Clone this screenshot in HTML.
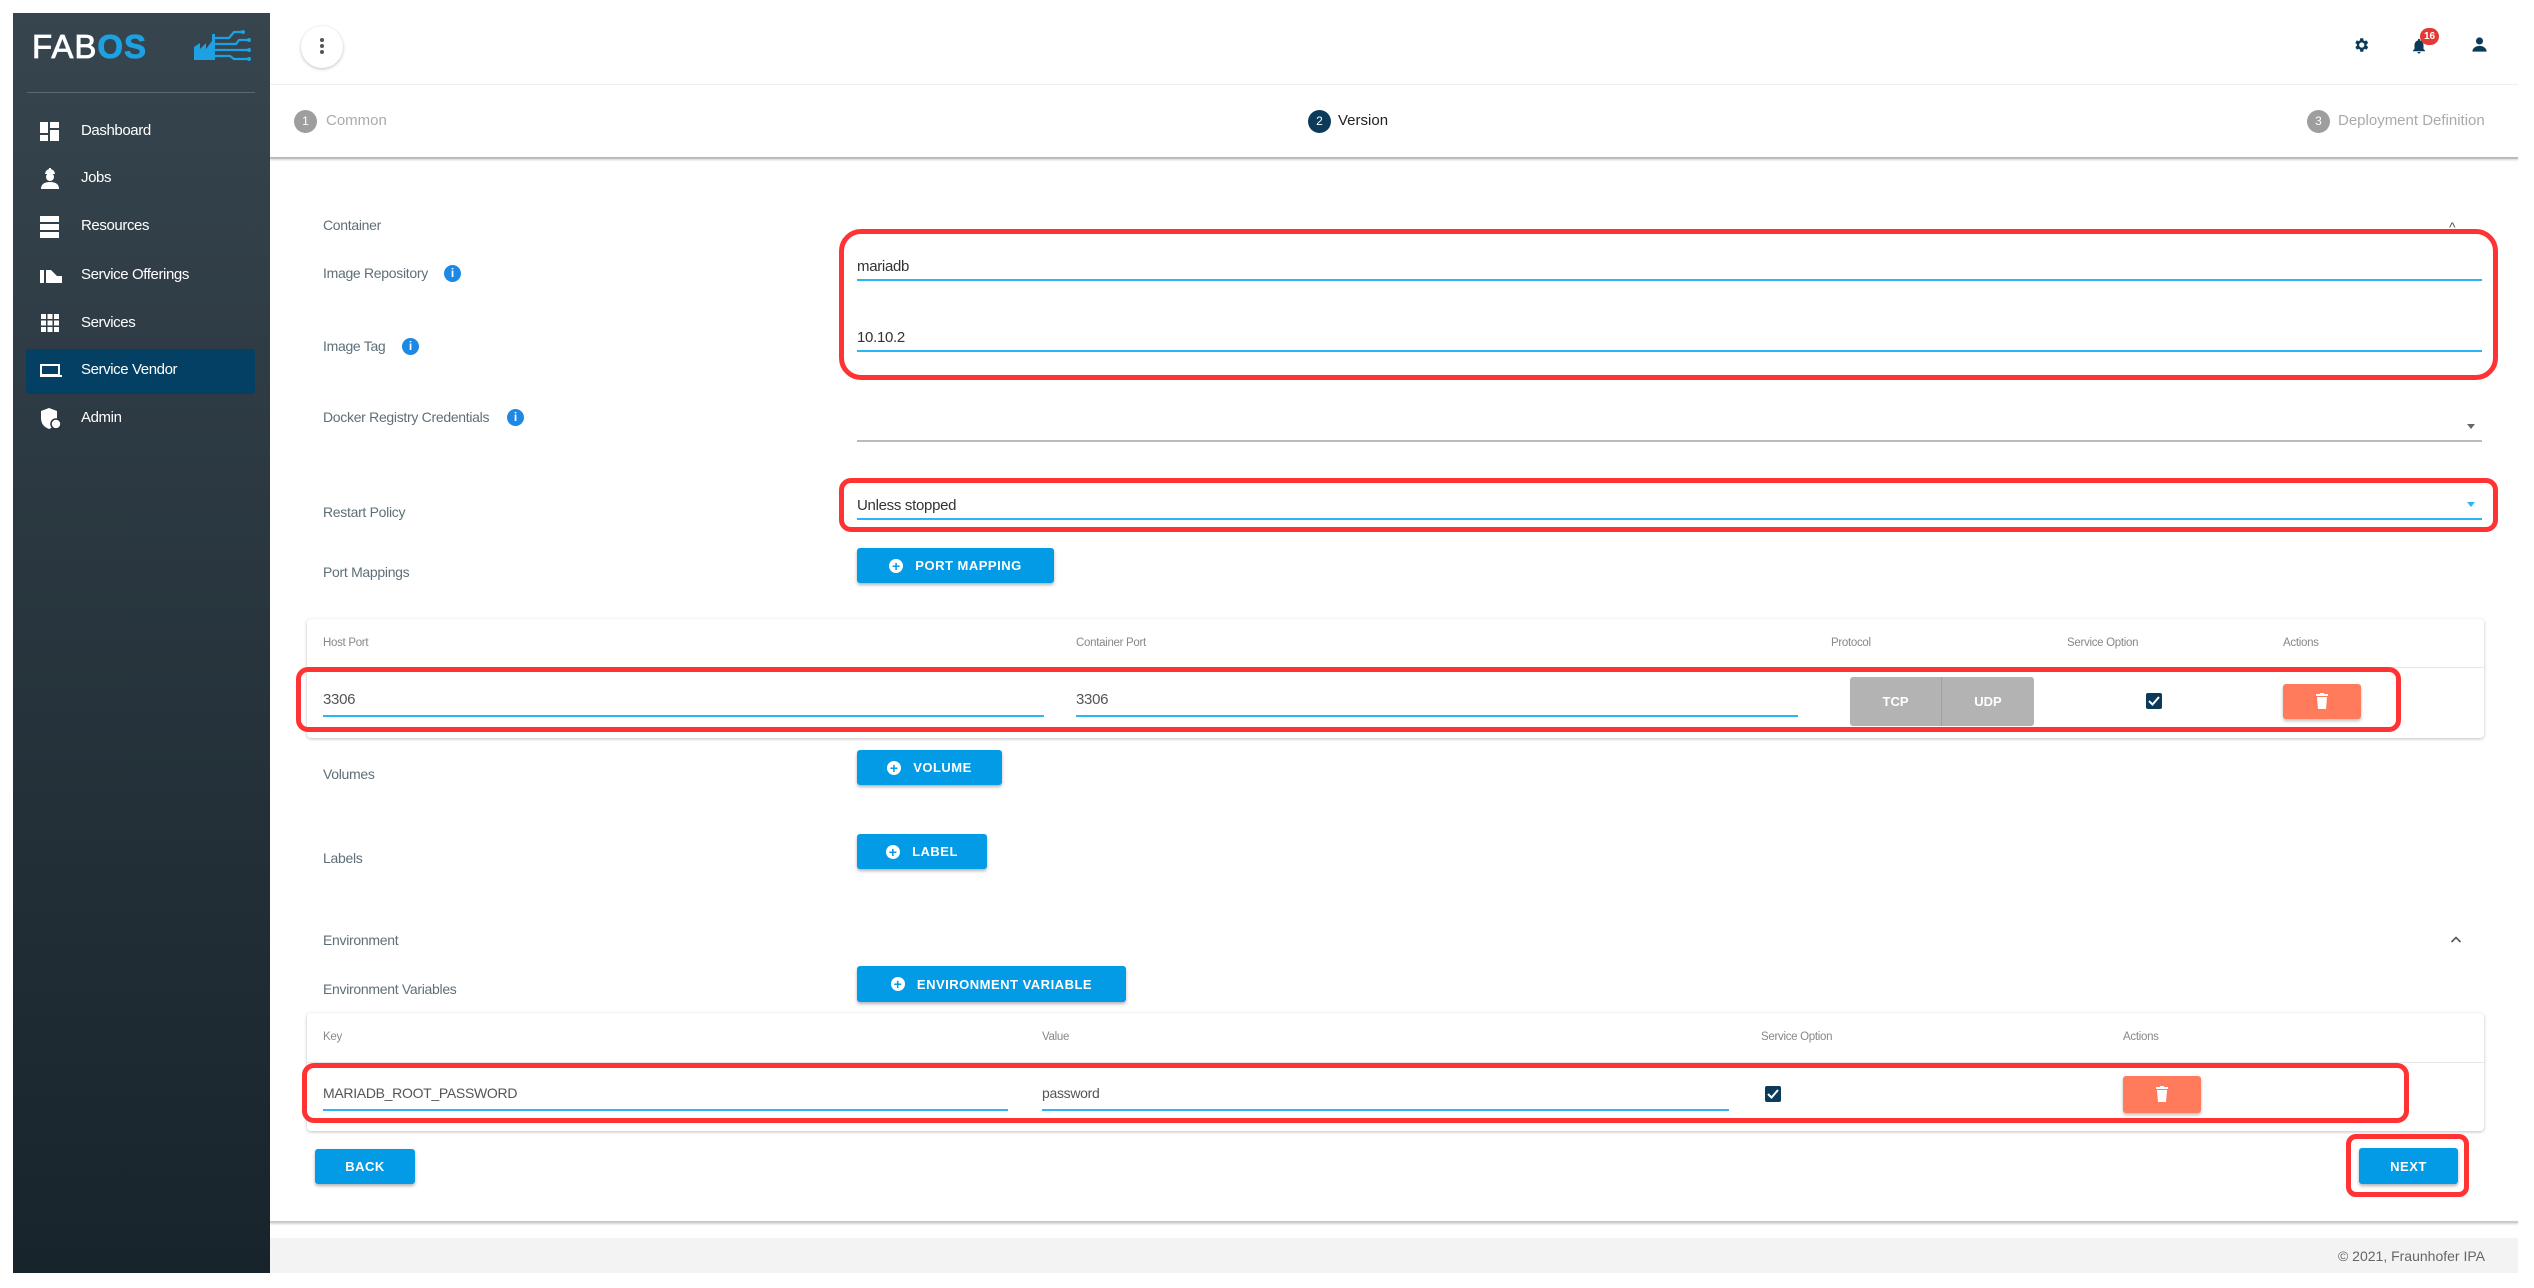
<!DOCTYPE html>
<html><head><meta charset="utf-8">
<style>
*{margin:0;padding:0;box-sizing:border-box}
body{width:2534px;height:1288px;position:relative;background:#fff;font-family:"Liberation Sans",sans-serif;overflow:hidden}
.a{position:absolute}
.t{position:absolute;height:30px;line-height:30px;white-space:nowrap}
#side{left:13px;top:13px;width:257px;height:1260px;background:linear-gradient(#37454f,#18242b)}
.nav{color:#fff;font-size:15px;letter-spacing:-0.4px}
.lbl{color:#5e6f78;font-size:14px;letter-spacing:-0.3px}
.hd{color:#888;font-size:11.5px;letter-spacing:-0.3px}
.inp{color:#333;font-size:15px;letter-spacing:-0.3px}
.ul{position:absolute;height:2px;background:#29b6f6}
.btn{position:absolute;background:#039be5;color:#fff;font-weight:bold;font-size:13px;letter-spacing:.5px;border-radius:3px;box-shadow:0 2px 3px rgba(0,0,0,.3);display:flex;align-items:center;justify-content:center}
.plus{width:14px;height:14px;border-radius:50%;background:#fff;color:#039be5;font-size:14px;line-height:14px;text-align:center;margin-right:12px;font-weight:bold}
.red{position:absolute;border:5px solid #ff3333;border-radius:22px}
.info{position:absolute;width:17px;height:17px;border-radius:50%;background:#1e88e5;color:#fff;font-size:12px;font-weight:bold;text-align:center;line-height:17px}
.card{position:absolute;background:#fff;border-radius:4px;box-shadow:0 1px 3px rgba(0,0,0,.25)}
.del{position:absolute;background:#ff7b5c;border-radius:3px;box-shadow:0 2px 3px rgba(0,0,0,.25)}
.chk{position:absolute;width:16px;height:16px;background:#0b3a5a;border-radius:2px}
.step{position:absolute;width:23px;height:23px;border-radius:50%;color:#fff;font-size:12px;text-align:center;line-height:23px}
</style></head><body>
<div id="side" class="a"></div>
<div class="t" style="left:32px;top:30px;height:34px;line-height:34px;font-size:33px;color:#fff;letter-spacing:1px;-webkit-text-stroke:0.8px #fff">FAB<span style="color:#1da1e2;font-weight:bold;-webkit-text-stroke:0.8px #1da1e2">OS</span></div>
<svg class="a" style="left:194px;top:28px" width="58" height="34" viewBox="0 0 58 34"><g fill="#1da1e2"><path d="M0 32 L0 19 L6 15 L6 21 L12 15 L12 21 L18 13 L18 32 Z"/><rect x="18" y="6" width="3" height="26"/></g><g stroke="#1da1e2" stroke-width="2.2" fill="none"><path d="M21 10 H35 L40 4 H48"/><path d="M21 16 H42 L45 12 H54"/><path d="M21 22 H54"/><path d="M21 28 H36 L40 31 H54"/></g><g fill="#1da1e2"><circle cx="49" cy="4" r="2"/><circle cx="55" cy="12" r="2"/><circle cx="55" cy="22" r="2"/><circle cx="55" cy="31" r="2"/></g></svg>
<div class="a" style="left:27px;top:92px;width:228px;height:1px;background:#5a6872"></div>
<div class="a" style="left:26px;top:349px;width:229px;height:45px;background:#044063;border-radius:3px"></div>
<svg class="a" style="left:40px;top:122px" width="20" height="20"><rect x="0" y="0" width="8" height="11" fill="#fff"/><rect x="10" y="0" width="9" height="6" fill="#fff"/><rect x="10" y="8" width="9" height="11" fill="#fff"/><rect x="0" y="13" width="8" height="6" fill="#fff"/></svg>
<svg class="a" style="left:41px;top:168px" width="18" height="22"><path d="M4 6 a5 5 0 0 1 10 0 z" fill="#fff"/><rect x="8" y="0" width="2" height="3" fill="#fff"/><circle cx="9" cy="9" r="4" fill="#fff"/><path d="M0 21 q0-7 9-7 q9 0 9 7z" fill="#fff"/></svg>
<svg class="a" style="left:40px;top:216px" width="20" height="22"><rect y="0" width="19" height="6" fill="#fff"/><rect y="8" width="19" height="6" fill="#fff"/><rect y="16" width="19" height="6" fill="#fff"/></svg>
<svg class="a" style="left:40px;top:268px" width="24" height="16"><rect x="0" y="2" width="4" height="13" fill="#fff"/><path d="M6 2 h5 l6 6 h5 v7 h-16z" fill="#fff"/></svg>
<svg class="a" style="left:41px;top:314px" width="18" height="18" fill="#fff"><rect x="0" y="0" width="5" height="5"/><rect x="6.5" y="0" width="5" height="5"/><rect x="13" y="0" width="5" height="5"/><rect x="0" y="6.5" width="5" height="5"/><rect x="6.5" y="6.5" width="5" height="5"/><rect x="13" y="6.5" width="5" height="5"/><rect x="0" y="13" width="5" height="5"/><rect x="6.5" y="13" width="5" height="5"/><rect x="13" y="13" width="5" height="5"/></svg>
<svg class="a" style="left:40px;top:364px" width="22" height="14"><rect x="1" y="1" width="18" height="10" fill="none" stroke="#fff" stroke-width="2"/><rect x="0" y="11" width="22" height="2" fill="#fff"/></svg>
<svg class="a" style="left:41px;top:408px" width="20" height="22"><path d="M8 0 L16 3 V10 Q16 18 8 21 Q0 18 0 10 V3Z" fill="#fff"/><circle cx="15" cy="16" r="5" fill="#fff" stroke="#263238" stroke-width="1.5"/></svg>
<div class="t nav" style="left:81px;top:116px">Dashboard</div>
<div class="t nav" style="left:81px;top:163px">Jobs</div>
<div class="t nav" style="left:81px;top:211px">Resources</div>
<div class="t nav" style="left:81px;top:260px">Service Offerings</div>
<div class="t nav" style="left:81px;top:308px">Services</div>
<div class="t nav" style="left:81px;top:355px">Service Vendor</div>
<div class="t nav" style="left:81px;top:403px">Admin</div>

<div class="a" style="left:301px;top:26px;width:42px;height:42px;border-radius:50%;background:#fff;box-shadow:0 1px 3px rgba(0,0,0,.25)"></div>
<div class="a" style="left:320px;top:38px;width:4px;height:4px;border-radius:50%;background:#555;box-shadow:0 6px 0 #555,0 12px 0 #555"></div>
<svg class="a" style="left:2352px;top:36px" width="18" height="18" viewBox="0 0 24 24"><path fill="#0b3a5a" d="M19.4 13a7.5 7.5 0 0 0 0-2l2.1-1.6-2-3.5-2.5 1a7 7 0 0 0-1.7-1L15 3h-4l-.4 2.9a7 7 0 0 0-1.7 1l-2.5-1-2 3.5L6.6 11a7.5 7.5 0 0 0 0 2l-2.1 1.6 2 3.5 2.5-1a7 7 0 0 0 1.7 1L11 21h4l.4-2.9a7 7 0 0 0 1.7-1l2.5 1 2-3.5zM13 15.5a3.5 3.5 0 1 1 0-7 3.5 3.5 0 0 1 0 7z"/></svg>
<svg class="a" style="left:2410px;top:36px" width="18" height="20" viewBox="0 0 24 24"><path fill="#0b3a5a" d="M12 22a2 2 0 0 0 2-2h-4a2 2 0 0 0 2 2zm6-6v-5c0-3-1.6-5.6-4.5-6.3V4a1.5 1.5 0 0 0-3 0v.7C7.6 5.4 6 8 6 11v5l-2 2v1h16v-1z"/></svg>
<div class="a" style="left:2420px;top:28px;width:19px;height:17px;border-radius:9px;background:#e53935;color:#fff;font-size:10px;font-weight:bold;text-align:center;line-height:17px">16</div>
<svg class="a" style="left:2471px;top:36px" width="17" height="17" viewBox="0 0 24 24"><circle cx="12" cy="7" r="5" fill="#0b3a5a"/><path d="M2 22c0-5 5-8 10-8s10 3 10 8z" fill="#0b3a5a"/></svg>

<div class="a" style="left:270px;top:84px;width:2248px;height:1px;background:#eee"></div>
<div class="a" style="left:270px;top:157px;width:2248px;height:2px;background:#bbb;box-shadow:0 1px 2px rgba(0,0,0,.2)"></div>
<div class="step" style="left:294px;top:110px;background:#9e9e9e">1</div>
<div class="t" style="left:326px;top:106px;color:#aaa;font-size:15px">Common</div>
<div class="step" style="left:1308px;top:110px;background:#0b3a5a">2</div>
<div class="t" style="left:1338px;top:106px;color:#222;font-size:15px">Version</div>
<div class="step" style="left:2307px;top:110px;background:#9e9e9e">3</div>
<div class="t" style="left:2338px;top:106px;color:#aaa;font-size:15px">Deployment Definition</div>

<div class="t lbl" style="left:323px;top:210px">Container</div>
<div class="t" style="left:2449px;top:212px;color:#555;font-size:14px">^</div>
<div class="t lbl" style="left:323px;top:258px">Image Repository</div><div class="info" style="left:444px;top:265px">i</div>
<div class="t lbl" style="left:323px;top:331px">Image Tag</div><div class="info" style="left:402px;top:338px">i</div>
<div class="t lbl" style="left:323px;top:402px">Docker Registry Credentials</div><div class="info" style="left:507px;top:409px">i</div>
<div class="t lbl" style="left:323px;top:497px">Restart Policy</div>
<div class="t lbl" style="left:323px;top:557px">Port Mappings</div>

<div class="t inp" style="left:857px;top:252px">mariadb</div><div class="ul" style="left:857px;top:279px;width:1625px"></div>
<div class="t inp" style="left:857px;top:323px">10.10.2</div><div class="ul" style="left:857px;top:350px;width:1625px"></div>
<div class="ul" style="left:857px;top:440px;width:1625px;background:#bbb"></div>
<div class="a" style="left:2467px;top:424px;border:4px solid transparent;border-top:5px solid #666"></div>
<div class="t inp" style="left:857px;top:491px">Unless stopped</div><div class="ul" style="left:857px;top:518px;width:1625px"></div>
<div class="a" style="left:2467px;top:502px;border:4px solid transparent;border-top:5px solid #29b6f6"></div>

<div class="red" style="left:839px;top:229px;width:1659px;height:151px"></div>
<div class="red" style="left:839px;top:478px;width:1659px;height:54px;border-radius:12px"></div>

<div class="btn" style="left:857px;top:548px;width:197px;height:35px"><span class="plus">+</span>PORT MAPPING</div>

<div class="card" style="left:307px;top:619px;width:2177px;height:119px"></div>
<div class="a" style="left:307px;top:667px;width:2177px;height:1px;background:#e6e6e6"></div>
<div class="t hd" style="left:323px;top:628px">Host Port</div>
<div class="t hd" style="left:1076px;top:628px">Container Port</div>
<div class="t hd" style="left:1831px;top:628px">Protocol</div>
<div class="t hd" style="left:2067px;top:628px">Service Option</div>
<div class="t hd" style="left:2283px;top:628px">Actions</div>
<div class="t inp" style="left:323px;top:685px;color:#555">3306</div><div class="ul" style="left:323px;top:715px;width:721px"></div>
<div class="t inp" style="left:1076px;top:685px;color:#555">3306</div><div class="ul" style="left:1076px;top:715px;width:722px"></div>
<div class="a" style="left:1850px;top:677px;width:184px;height:49px;background:#b3b3b3;border-radius:3px;color:#fff;font-weight:bold;font-size:13px;display:flex"><div style="width:92px;line-height:49px;text-align:center;border-right:1px solid #a0a0a0">TCP</div><div style="flex:1;line-height:49px;text-align:center">UDP</div></div>
<div class="chk" style="left:2146px;top:693px"></div><svg class="a" style="left:2146px;top:693px" width="16" height="16"><path d="M3 8 l3.5 3.5 L13 4" stroke="#fff" stroke-width="2" fill="none"/></svg>
<div class="del" style="left:2283px;top:684px;width:78px;height:35px"></div>
<svg class="a" style="left:2316px;top:693px" width="12" height="16"><rect x="0" y="1" width="12" height="2" fill="#fff"/><rect x="4" y="0" width="4" height="2" fill="#fff"/><path d="M1 4 h10 l-1 12 h-8z" fill="#fff"/></svg>
<div class="red" style="left:296px;top:667px;width:2105px;height:65px;border-radius:12px"></div>

<div class="t lbl" style="left:323px;top:759px">Volumes</div>
<div class="btn" style="left:857px;top:750px;width:145px;height:35px"><span class="plus">+</span>VOLUME</div>
<div class="t lbl" style="left:323px;top:843px">Labels</div>
<div class="btn" style="left:857px;top:834px;width:130px;height:35px"><span class="plus">+</span>LABEL</div>

<div class="t lbl" style="left:323px;top:925px">Environment</div>
<svg class="a" style="left:2450px;top:935px" width="12" height="9"><path d="M1.5 7 L6 2.5 L10.5 7" stroke="#555" stroke-width="1.6" fill="none"/></svg>
<div class="t lbl" style="left:323px;top:974px">Environment Variables</div>
<div class="btn" style="left:857px;top:966px;width:269px;height:36px"><span class="plus">+</span>ENVIRONMENT VARIABLE</div>

<div class="card" style="left:307px;top:1013px;width:2177px;height:118px"></div>
<div class="a" style="left:307px;top:1062px;width:2177px;height:1px;background:#e6e6e6"></div>
<div class="t hd" style="left:323px;top:1022px">Key</div>
<div class="t hd" style="left:1042px;top:1022px">Value</div>
<div class="t hd" style="left:1761px;top:1022px">Service Option</div>
<div class="t hd" style="left:2123px;top:1022px">Actions</div>
<div class="t inp" style="left:323px;top:1078px;color:#555;font-size:14px">MARIADB_ROOT_PASSWORD</div><div class="ul" style="left:323px;top:1109px;width:685px"></div>
<div class="t inp" style="left:1042px;top:1078px;color:#555;font-size:14px">password</div><div class="ul" style="left:1042px;top:1109px;width:687px"></div>
<div class="chk" style="left:1765px;top:1086px"></div><svg class="a" style="left:1765px;top:1086px" width="16" height="16"><path d="M3 8 l3.5 3.5 L13 4" stroke="#fff" stroke-width="2" fill="none"/></svg>
<div class="del" style="left:2123px;top:1076px;width:78px;height:37px"></div>
<svg class="a" style="left:2156px;top:1086px" width="12" height="16"><rect x="0" y="1" width="12" height="2" fill="#fff"/><rect x="4" y="0" width="4" height="2" fill="#fff"/><path d="M1 4 h10 l-1 12 h-8z" fill="#fff"/></svg>
<div class="red" style="left:302px;top:1063px;width:2107px;height:60px;border-radius:12px"></div>

<div class="btn" style="left:315px;top:1149px;width:100px;height:35px">BACK</div>
<div class="btn" style="left:2359px;top:1148px;width:99px;height:36px">NEXT</div>
<div class="red" style="left:2346px;top:1134px;width:123px;height:63px;border-radius:10px"></div>

<div class="a" style="left:270px;top:1221px;width:2248px;height:2px;background:#ccc;box-shadow:0 1px 2px rgba(0,0,0,.2)"></div>
<div class="a" style="left:270px;top:1238px;width:2248px;height:35px;background:#f3f3f3"></div>
<div class="t" style="left:2300px;top:1241px;width:185px;text-align:right;color:#666;font-size:14px">© 2021, Fraunhofer IPA</div>
</body></html>
